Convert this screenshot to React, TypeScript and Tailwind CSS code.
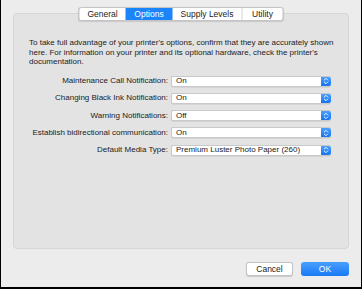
import React from "react";

const rows: [string, string][] = [
  ["Maintenance Call Notification:", "On"],
  ["Changing Black Ink Notification:", "On"],
  ["Warning Notifications:", "Off"],
  ["Establish bidirectional communication:", "On"],
  ["Default Media Type:", "Premium Luster Photo Paper (260)"],
];

function Stepper() {
  return (
    <div className="h-full w-[10px] rounded-r-[2px] bg-gradient-to-b from-[#4aa0fd] to-[#1673f0] flex items-center justify-center">
      <svg width="6" height="8" viewBox="0 0 6 8" fill="none">
        <path d="M1.3 3 L3 1.3 L4.7 3" stroke="white" strokeWidth="0.9" strokeLinecap="round" strokeLinejoin="round" />
        <path d="M1.3 5 L3 6.7 L4.7 5" stroke="white" strokeWidth="0.9" strokeLinecap="round" strokeLinejoin="round" />
      </svg>
    </div>
  );
}

function Select({ value }: { value: string }) {
  return (
    <div className="h-[11px] flex items-stretch rounded-[2px] bg-white border border-[#c9c9c9] border-r-0 shadow-[0_0.5px_0.5px_rgba(0,0,0,0.12)]">
      <div className="flex-1 pl-[4px] flex items-center text-[8px] leading-none text-[#222]">{value}</div>
      <Stepper />
    </div>
  );
}

export default function App() {
  const tabs = [
    { name: "General", w: "w-[46px]", active: false },
    { name: "Options", w: "w-[47px]", active: true },
    { name: "Supply Levels", w: "w-[69px]", active: false },
    { name: "Utility", w: "w-[41px]", active: false },
  ];
  return (
    <div
      className="w-[362px] h-[289px] bg-black pl-px pr-px pb-[2px]"
      style={{ fontFamily: '"Liberation Sans", Arial, sans-serif' }}
    >
      <div className="w-full h-full bg-[#ececec] px-[12px] pt-[13px] flex flex-col">
        <div className="relative h-[236px] rounded-[4px] border border-[#d6d6d6] bg-[#e3e3e3] pt-[24px] pl-[15px] pr-[17px]">
          <div className="absolute top-[-7px] left-1/2 -translate-x-1/2 flex h-[14px] rounded-[3px] border border-[#c4c4c4] bg-white shadow-[0_0.5px_1px_rgba(0,0,0,0.12)] overflow-hidden">
            {tabs.map((t, i) => (
              <div
                key={t.name}
                className={`${t.w} h-full flex items-center justify-center text-[8.5px] leading-none ${
                  t.active ? "bg-[#1b84fb] text-white" : "text-[#222]"
                } ${i > 0 && !t.active && !tabs[i - 1].active ? "border-l border-[#d4d4d4]" : ""}`}
              >
                {t.name}
              </div>
            ))}
          </div>
          <p className="mr-[-12px] text-[8px] leading-[9.5px] text-[#222]">
            To take full advantage of your printer's options, confirm that they are accurately shown here. For information on your printer and its optional hardware, check the printer's documentation.
          </p>
          <div className="mt-[6px] grid grid-cols-[139px_1fr] gap-x-[3px]">
            {rows.map(([label, value]) => (
              <React.Fragment key={label}>
                <div className="h-[17.25px] flex items-center justify-end text-[8px] leading-none text-[#222] whitespace-nowrap">
                  {label}
                </div>
                <div className="h-[17.25px] flex items-center">
                  <div className="w-full">
                    <Select value={value} />
                  </div>
                </div>
              </React.Fragment>
            ))}
          </div>
        </div>
        <div className="flex justify-end gap-[8px] mt-[13px]">
          <div className="w-[47px] h-[14px] rounded-[3px] bg-white border border-[#c3c3c3] shadow-[0_0.5px_1px_rgba(0,0,0,0.15)] flex items-center justify-center text-[8.5px] leading-none text-[#222]">
            Cancel
          </div>
          <div className="w-[48px] h-[14px] rounded-[3px] bg-gradient-to-b from-[#48a0fd] to-[#1778f5] flex items-center justify-center text-[8.5px] leading-none text-white">
            OK
          </div>
        </div>
      </div>
    </div>
  );
}
